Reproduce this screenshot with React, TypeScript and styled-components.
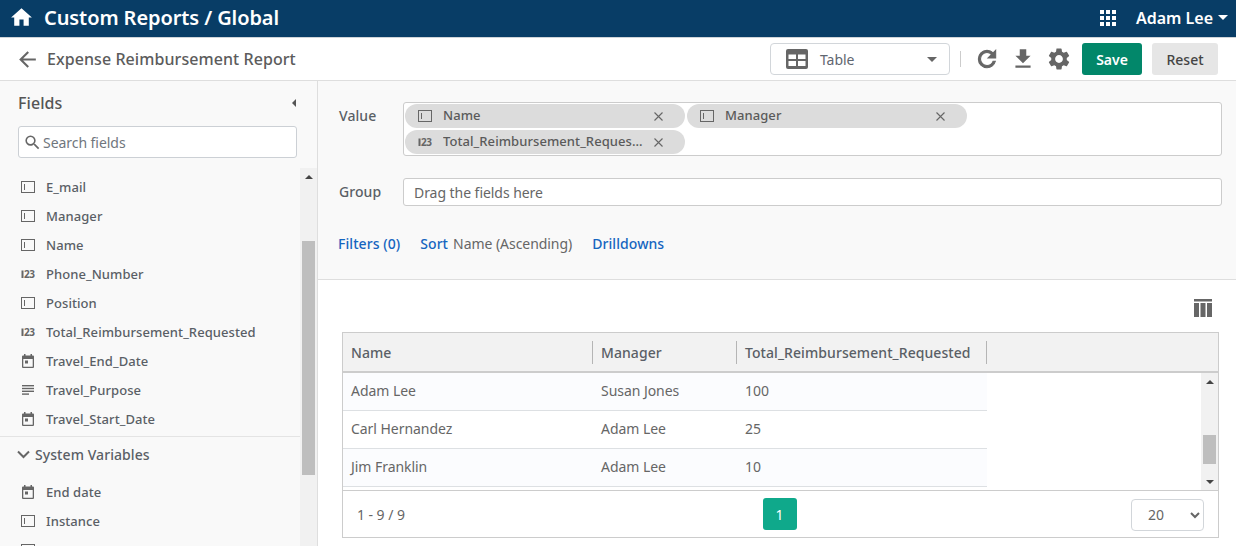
import styled, { createGlobalStyle } from 'styled-components';
import { MdArrowBack, MdFileDownload, MdHome, MdSearch, MdSettings } from 'react-icons/md';

const GlobalStyle = createGlobalStyle`
  html, body {
    margin: 0;
    height: 100%;
    overflow: hidden;
    background: #fff;
    font-family: 'Noto Sans', 'Open Sans', sans-serif;
    letter-spacing: -0.05px;
    color: #555;
  }
  * { box-sizing: border-box; }
`;

const Page = styled.div`
  display: flex;
  flex-direction: column;
  height: 546px;
  overflow: hidden;
`;

const TopBar = styled.header`
  display: flex;
  align-items: center;
  flex: none;
  height: 38px;
  padding: 0 8px 2px 9px;
  background: #083d66;
  border-bottom: 1px solid #cfd4d8;
  color: #fff;
`;

const BarTitle = styled.h1`
  flex: 1;
  margin: 0 0 0 10px;
  font-size: 20px;
  font-weight: 600;
  line-height: 26px;
  letter-spacing: -0.09px;
`;

const UserName = styled.span`
  margin-left: 20px;
  font-size: 16px;
  font-weight: 600;
  letter-spacing: 0;
`;

const Caret = styled.span<{ $dir?: 'down' | 'up' | 'left'; $color?: string; $size?: number }>`
  display: inline-block;
  width: 0;
  height: 0;
  border-style: solid;
  border-color: transparent;
  ${({ $dir = 'down', $color = '#fff', $size = 5 }) =>
    $dir === 'down'
      ? `border-width: ${$size}px ${$size}px 0; border-top-color: ${$color};`
      : $dir === 'up'
        ? `border-width: 0 ${$size}px ${$size}px; border-bottom-color: ${$color};`
        : `border-width: ${$size}px ${$size}px ${$size}px 0; border-right-color: ${$color};`}
`;

const UserCaret = styled(Caret)`
  margin-left: 5px;
`;

const AppsGrid = styled.span`
  display: grid;
  grid-template-columns: repeat(3, 4px);
  grid-auto-rows: 4px;
  gap: 2px;
`;

const AppsDot = styled.i`
  display: block;
  background: #fff;
`;

const ToolBar = styled.div`
  display: flex;
  align-items: center;
  flex: none;
  height: 43px;
  padding: 0 18px;
  background: #fff;
  border-bottom: 1px solid #dedede;
`;

const BackIcon = styled(MdArrowBack)`
  flex: none;
  margin-left: -3px;
  color: #666;
  font-size: 25px;
`;

const ReportTitle = styled.h2`
  flex: 1;
  margin: 0 0 0 7px;
  font-size: 16px;
  font-weight: 500;
  letter-spacing: 0.07px;
  color: #5c5c5c;
`;

const ChartSelect = styled.div`
  display: flex;
  align-items: center;
  width: 180px;
  height: 32px;
  padding: 0 12px 0 15px;
  border: 1px solid #d2d6da;
  border-radius: 4px;
  font-size: 14px;
  color: #5f6670;
`;

const ChartSelectLabel = styled.span`
  flex: 1;
  margin-left: 12px;
`;

const ToolDivider = styled.span`
  width: 1px;
  height: 16px;
  margin: 0 8px 0 10px;
  background: #ccc;
`;

const ToolIcon = styled.span`
  display: flex;
  align-items: center;
  justify-content: center;
  width: 36px;
  color: #666;
  font-size: 26px;
`;

const RefreshSvg = styled.svg`
  width: 26px;
  height: 26px;
  fill: currentColor;
  stroke: currentColor;
  stroke-width: 1;
`;

const ActionButton = styled.button<{ $primary?: boolean }>`
  width: ${({ $primary }) => ($primary ? '60px' : '66px')};
  height: 32px;
  margin-left: ${({ $primary }) => ($primary ? '5px' : '10px')};
  padding: 0;
  border: 0;
  border-radius: 3px;
  background: ${({ $primary }) => ($primary ? '#02876a' : '#e6e6e6')};
  color: ${({ $primary }) => ($primary ? '#fff' : '#444')};
  font-family: inherit;
  font-size: 14px;
  font-weight: ${({ $primary }) => ($primary ? 600 : 500)};
`;

const Body = styled.div`
  display: flex;
  flex: 1;
  min-height: 0;
`;

const Sidebar = styled.aside`
  display: flex;
  flex-direction: column;
  flex: none;
  width: 318px;
  background: #f9f9f9;
  border-right: 1px solid #dedede;
`;

const SideHead = styled.div`
  display: flex;
  align-items: center;
  justify-content: space-between;
  height: 24px;
  margin: 10px 21px 0 18px;
  font-size: 16px;
  font-weight: 500;
  letter-spacing: 0.07px;
`;

const SearchBox = styled.div`
  display: flex;
  align-items: center;
  height: 32px;
  margin: 11px 20px 10px 18px;
  padding-left: 4px;
  background: #fff;
  border: 1px solid #ccd0d5;
  border-radius: 3px;
  color: #666;
  font-size: 14px;
`;

const SearchIcon = styled(MdSearch)`
  flex: none;
  margin-right: 1px;
  font-size: 19px;
`;

const Placeholder = styled.span`
  color: #70767d;
`;

const SideScroll = styled.div`
  display: flex;
  flex: 1;
  min-height: 0;
`;

const FieldList = styled.div`
  flex: 1;
  overflow: hidden;
  padding-top: 4px;
`;

const FieldRow = styled.div`
  display: flex;
  align-items: center;
  height: 29px;
  padding-left: 21px;
  font-size: 13px;
  font-weight: 500;
  letter-spacing: 0.07px;
  color: #5a5f66;
`;

const FieldGlyph = styled.span`
  display: flex;
  align-items: center;
  justify-content: center;
  flex: none;
  width: 14px;
  height: 14px;
  margin-right: 11px;
  color: #666;
`;

const NumberText = styled.text`
  font-family: 'Noto Sans', sans-serif;
  font-size: 10px;
  font-weight: 700;
  letter-spacing: -0.5px;
  fill: #666;
`;

const GroupHead = styled.div`
  display: flex;
  align-items: center;
  height: 36px;
  margin: 3px 0 5px;
  padding-left: 17px;
  border-top: 1px solid #e4e4e4;
  font-size: 14px;
  font-weight: 500;
  letter-spacing: 0.07px;
  color: #5a5f66;
`;

const Chevron = styled.svg`
  width: 13px;
  height: 9px;
  margin-right: 5px;
`;

const ScrollTrack = styled.div`
  display: flex;
  flex-direction: column;
  align-items: center;
  flex: none;
  width: 17px;
  background: #f1f1f1;
`;

const ScrollCap = styled.span<{ $end?: boolean }>`
  display: flex;
  align-items: center;
  justify-content: center;
  flex: none;
  width: 100%;
  height: 17px;
  margin-top: ${({ $end }) => ($end ? 'auto' : '0')};
`;

const ScrollThumb = styled.span<{ $top: number; $height: number }>`
  flex: none;
  width: 13px;
  height: ${({ $height }) => $height}px;
  margin-top: ${({ $top }) => $top}px;
  background: #bebebe;
`;

const Main = styled.main`
  display: flex;
  flex-direction: column;
  flex: 1;
  min-width: 0;
`;

const Builder = styled.section`
  flex: none;
  height: 199px;
  padding: 21px 14px 0 21px;
  background: #f9f9f9;
  border-bottom: 1px solid #dedede;
`;

const BuilderRow = styled.div`
  display: grid;
  grid-template-columns: 64px 1fr;
  margin-bottom: 22px;
`;

const RowLabel = styled.label`
  padding-top: 4px;
  font-size: 14px;
  font-weight: 500;
  line-height: 19px;
  letter-spacing: 0.07px;
  color: #5a5f66;
`;

const DropZone = styled.div`
  display: flex;
  flex-wrap: wrap;
  align-items: center;
  gap: 2px;
  min-height: 28px;
  padding: 1px;
  background: #fff;
  border: 1px solid #ccc;
  border-radius: 3px;
  font-size: 14px;
  color: #666;
`;

const DropHint = styled.span`
  padding-left: 9px;
`;

const Chip = styled.span`
  display: flex;
  align-items: center;
  width: 280px;
  height: 24px;
  padding: 0 22px 0 13px;
  background: #dcdcdc;
  border-radius: 12px;
  font-size: 13px;
  font-weight: 500;
  letter-spacing: 0.07px;
  color: #5a5a5a;
`;

const ChipText = styled.span`
  flex: 1;
  min-width: 0;
  padding-bottom: 2px;
  overflow: hidden;
  white-space: nowrap;
  text-overflow: ellipsis;
`;

const ChipClose = styled.svg`
  flex: none;
  width: 9px;
  height: 9px;
  margin-left: 9px;
`;

const LinkRow = styled.div`
  display: flex;
  align-items: center;
  height: 20px;
  margin: 27px 0 0 -1px;
  font-size: 14px;
`;

const LinkText = styled.a`
  font-weight: 500;
  letter-spacing: 0.07px;
  color: #1565c0;
`;

const LinkGap = styled.span`
  width: 20px;
`;

const SortValue = styled.span`
  margin-left: 5px;
  color: #666;
`;

const ResultArea = styled.section`
  flex: 1;
  min-height: 0;
  padding: 0 17px 0 24px;
  background: #fff;
`;

const ColumnsBar = styled.div`
  display: flex;
  justify-content: flex-end;
  align-items: flex-end;
  height: 37px;
  padding-right: 7px;
  margin-bottom: 15px;
`;

const DataTable = styled.div`
  display: flex;
  flex-direction: column;
  height: 206px;
  border: 1px solid #ccc;
`;

const HeaderRow = styled.div`
  display: flex;
  align-items: center;
  flex: none;
  height: 40px;
  background: #f2f2f2;
  border-bottom: 2px solid #ccc;
`;

const HeadCell = styled.div<{ $width: number }>`
  flex: none;
  width: ${({ $width }) => $width}px;
  height: 23px;
  padding-left: 8px;
  border-right: 1px solid #b5b5b5;
  font-size: 14px;
  font-weight: 500;
  line-height: 23px;
  letter-spacing: 0.07px;
  color: #5a5f66;
  white-space: nowrap;
`;

const TableBody = styled.div`
  display: flex;
  flex: none;
  height: 118px;
  border-bottom: 1px solid #ccc;
`;

const Rows = styled.div`
  flex: 1;
  min-width: 0;
  overflow: hidden;
`;

const DataRow = styled.div<{ $odd: boolean }>`
  display: flex;
  align-items: center;
  width: 644px;
  height: 38px;
  background: ${({ $odd }) => ($odd ? '#fbfcfe' : '#fff')};
  border-bottom: 1px solid #dde0e3;
`;

const DataCell = styled.div<{ $width: number }>`
  flex: none;
  width: ${({ $width }) => $width}px;
  padding: 0 0 2px 8px;
  font-size: 14px;
  color: #666;
`;

const Pager = styled.div`
  display: grid;
  grid-template-columns: 1fr auto 1fr;
  align-items: center;
  flex: 1;
  padding: 0 14px 0 14px;
  font-size: 14px;
  color: #666;
`;

const PageButton = styled.button`
  width: 34px;
  height: 32px;
  margin-right: 2px;
  padding: 0;
  border: 0;
  border-radius: 3px;
  background: #0fa98b;
  color: #fff;
  font-family: inherit;
  font-size: 14px;
`;

const PageSize = styled.select`
  justify-self: end;
  width: 73px;
  height: 32px;
  margin-top: 1px;
  padding-left: 12px;
  background: #fff;
  border: 1px solid #d2d6da;
  border-radius: 4px;
  color: #666;
  font-family: inherit;
  font-size: 14px;
`;

const RefreshIcon = () => (
  <RefreshSvg viewBox="0 0 24 24">
    <path d="M17.650 6.350C16.200 4.900 14.210 4 12 4c-4.420 0-7.990 3.580-7.990 8s3.570 8 7.990 8c3.730 0 6.840-2.550 7.730-6h-2.080c-.820 2.330-3.040 4-5.650 4-3.310 0-6-2.690-6-6s2.690-6 6-6c1.660 0 3.140.690 4.220 1.780L13 11h7V4l-2.350 2.350z" />
  </RefreshSvg>
);

const TextFieldIcon = () => (
  <svg width="14" height="12" viewBox="0 0 14 12" fill="none" stroke="#666" strokeWidth="1">
    <rect x="0.5" y="0.5" width="13" height="11" />
    <path d="M3.5 3v6" />
  </svg>
);

// the bar stands in for the "1" of the number-field glyph
const NumberIcon = () => (
  <svg width="14" height="14" viewBox="0 0 14 14">
    <rect x="0.5" y="3.500" width="2" height="7.500" fill="#666" />
    <NumberText x="3" y="11">
      23
    </NumberText>
  </svg>
);

const DateIcon = () => (
  <svg width="12" height="14" viewBox="0 0 12 14" fill="#666">
    <path d="M2 0h1.5v1.5h5V0H10v1.5h1a1 1 0 0 1 1 1V13a1 1 0 0 1-1 1H1a1 1 0 0 1-1-1V2.500a1 1 0 0 1 1-1h1zM1.300 5v7.700h9.400V5z" />
    <rect x="3" y="6.500" width="3" height="3" />
  </svg>
);

const LinesIcon = () => (
  <svg width="12" height="10" viewBox="0 0 12 10" fill="#666">
    <rect width="12" height="1.400" />
    <rect y="2.800" width="12" height="1.400" />
    <rect y="5.600" width="12" height="1.400" />
    <rect y="8.400" width="7" height="1.400" />
  </svg>
);

const TableIcon = () => (
  <svg width="22" height="20" viewBox="0 0 22 20">
    <rect width="22" height="20" rx="2" fill="#666" />
    <rect x="2.500" y="5.500" width="7.500" height="4.500" fill="#fff" />
    <rect x="12" y="5.500" width="7.500" height="4.500" fill="#fff" />
    <rect x="2.500" y="12" width="7.500" height="5" fill="#fff" />
    <rect x="12" y="12" width="7.500" height="5" fill="#fff" />
  </svg>
);

const ColumnsIcon = () => (
  <svg width="18" height="18" viewBox="0 0 18 18" fill="#666">
    <rect width="18" height="2.500" />
    <rect y="4" width="5" height="14" />
    <rect x="6.500" y="4" width="5" height="14" />
    <rect x="13" y="4" width="5" height="14" />
  </svg>
);

const CloseIcon = () => (
  <ChipClose viewBox="0 0 9 9" fill="none" stroke="#666" strokeWidth="1.100">
    <path d="M0.500 0.500l8 8M8.500 0.500l-8 8" />
  </ChipClose>
);

type FieldKind = 'text' | 'number' | 'date' | 'lines';

const FieldIcon = ({ kind }: { kind: FieldKind }) => {
  if (kind === 'number') return <NumberIcon />;
  if (kind === 'date') return <DateIcon />;
  if (kind === 'lines') return <LinesIcon />;
  return <TextFieldIcon />;
};

const fields: { name: string; kind: FieldKind }[] = [
  { name: 'E_mail', kind: 'text' },
  { name: 'Manager', kind: 'text' },
  { name: 'Name', kind: 'text' },
  { name: 'Phone_Number', kind: 'number' },
  { name: 'Position', kind: 'text' },
  { name: 'Total_Reimbursement_Requested', kind: 'number' },
  { name: 'Travel_End_Date', kind: 'date' },
  { name: 'Travel_Purpose', kind: 'lines' },
  { name: 'Travel_Start_Date', kind: 'date' },
];

// the third row only shows the top of its icon at the bottom edge
const systemFields: { name: string; kind: FieldKind }[] = [
  { name: 'End date', kind: 'date' },
  { name: 'Instance', kind: 'text' },
  { name: '', kind: 'text' },
];

const chips: { name: string; kind: FieldKind }[] = [
  { name: 'Name', kind: 'text' },
  { name: 'Manager', kind: 'text' },
  { name: 'Total_Reimbursement_Requested', kind: 'number' },
];

const columns = [
  { title: 'Name', width: 250 },
  { title: 'Manager', width: 144 },
  { title: 'Total_Reimbursement_Requested', width: 250 },
];

const rows = [
  ['Adam Lee', 'Susan Jones', '100'],
  ['Carl Hernandez', 'Adam Lee', '25'],
  ['Jim Franklin', 'Adam Lee', '10'],
];

const App = () => (
  <Page>
    <GlobalStyle />
    <TopBar>
      <MdHome size={25} />
      <BarTitle>Custom Reports / Global</BarTitle>
      <AppsGrid>
        {Array.from({ length: 9 }, (_, i) => (
          <AppsDot key={i} />
        ))}
      </AppsGrid>
      <UserName>Adam Lee</UserName>
      <UserCaret $size={5} />
    </TopBar>
    <ToolBar>
      <BackIcon />
      <ReportTitle>Expense Reimbursement Report</ReportTitle>
      <ChartSelect>
        <TableIcon />
        <ChartSelectLabel>Table</ChartSelectLabel>
        <Caret $color="#666" />
      </ChartSelect>
      <ToolDivider />
      <ToolIcon>
        <RefreshIcon />
      </ToolIcon>
      <ToolIcon>
        <MdFileDownload />
      </ToolIcon>
      <ToolIcon>
        <MdSettings />
      </ToolIcon>
      <ActionButton $primary>Save</ActionButton>
      <ActionButton>Reset</ActionButton>
    </ToolBar>
    <Body>
      <Sidebar>
        <SideHead>
          Fields
          <Caret $dir="left" $color="#555" $size={4} />
        </SideHead>
        <SearchBox>
          <SearchIcon />
          <Placeholder>Search fields</Placeholder>
        </SearchBox>
        <SideScroll>
          <FieldList>
            {fields.map((f) => (
              <FieldRow key={f.name}>
                <FieldGlyph>
                  <FieldIcon kind={f.kind} />
                </FieldGlyph>
                {f.name}
              </FieldRow>
            ))}
            <GroupHead>
              <Chevron viewBox="0 0 13 9" fill="none" stroke="#666" strokeWidth="2">
                <path d="M1 1.500l5.500 5.500 5.500-5.500" />
              </Chevron>
              System Variables
            </GroupHead>
            {systemFields.map((f) => (
              <FieldRow key={f.name}>
                <FieldGlyph>
                  <FieldIcon kind={f.kind} />
                </FieldGlyph>
                {f.name}
              </FieldRow>
            ))}
          </FieldList>
          <ScrollTrack>
            <ScrollCap>
              <Caret $dir="up" $color="#444" $size={4} />
            </ScrollCap>
            <ScrollThumb $top={56} $height={234} />
          </ScrollTrack>
        </SideScroll>
      </Sidebar>
      <Main>
        <Builder>
          <BuilderRow>
            <RowLabel>Value</RowLabel>
            <DropZone>
              {chips.map((c) => (
                <Chip key={c.name}>
                  <FieldGlyph>
                    <FieldIcon kind={c.kind} />
                  </FieldGlyph>
                  <ChipText>{c.name}</ChipText>
                  <CloseIcon />
                </Chip>
              ))}
            </DropZone>
          </BuilderRow>
          <BuilderRow>
            <RowLabel>Group</RowLabel>
            <DropZone>
              <DropHint>Drag the fields here</DropHint>
            </DropZone>
          </BuilderRow>
          <LinkRow>
            <LinkText>Filters (0)</LinkText>
            <LinkGap />
            <LinkText>Sort</LinkText>
            <SortValue>Name (Ascending)</SortValue>
            <LinkGap />
            <LinkText>Drilldowns</LinkText>
          </LinkRow>
        </Builder>
        <ResultArea>
          <ColumnsBar>
            <ColumnsIcon />
          </ColumnsBar>
          <DataTable>
            <HeaderRow>
              {columns.map((c) => (
                <HeadCell key={c.title} $width={c.width}>
                  {c.title}
                </HeadCell>
              ))}
            </HeaderRow>
            <TableBody>
              <Rows>
                {rows.map((r, i) => (
                  <DataRow key={r[0]} $odd={i !== 1}>
                    {r.map((v, j) => (
                      <DataCell key={j} $width={columns[j].width}>
                        {v}
                      </DataCell>
                    ))}
                  </DataRow>
                ))}
              </Rows>
              <ScrollTrack>
                <ScrollCap>
                  <Caret $dir="up" $color="#444" $size={4} />
                </ScrollCap>
                <ScrollThumb $top={45} $height={29} />
                <ScrollCap $end>
                  <Caret $color="#444" $size={4} />
                </ScrollCap>
              </ScrollTrack>
            </TableBody>
            <Pager>
              <span>1 - 9 / 9</span>
              <PageButton>1</PageButton>
              <PageSize defaultValue="20">
                <option>10</option>
                <option>20</option>
                <option>50</option>
              </PageSize>
            </Pager>
          </DataTable>
        </ResultArea>
      </Main>
    </Body>
  </Page>
);

export default App;
